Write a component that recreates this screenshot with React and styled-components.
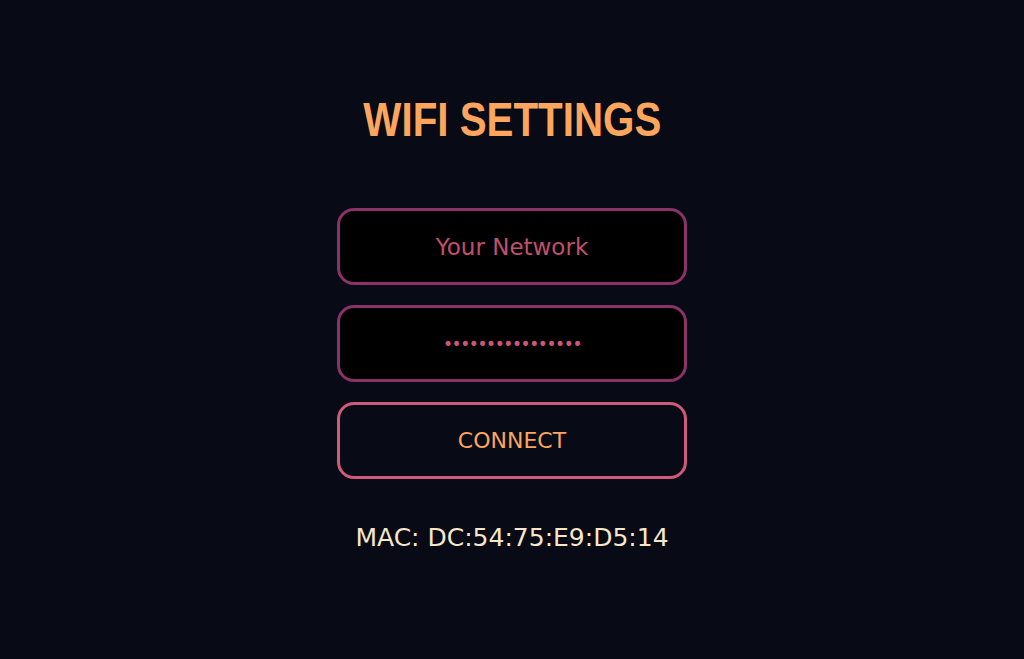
import styled, { createGlobalStyle } from "styled-components";

const GlobalStyle = createGlobalStyle`
  html, body {
    margin: 0;
    padding: 0;
    background: #080a16;
  }
`;

const Page = styled.div`
  min-height: 659px;
  display: flex;
  flex-direction: column;
  align-items: center;
  font-family: "DejaVu Sans", "Liberation Sans", sans-serif;
  background: #080a16;
`;

const Title = styled.h1`
  margin: 92px 0 0;
  font-family: "Liberation Sans", Arial, sans-serif;
  font-size: 48px;
  line-height: 56px;
  font-weight: 700;
  color: #fca55c;
  transform: scaleX(0.84);
`;

const Form = styled.form`
  margin-top: 60px;
  display: flex;
  flex-direction: column;
  gap: 20px;
  width: 350px;
`;

const Field = styled.input`
  box-sizing: border-box;
  width: 100%;
  height: 77px;
  border: 3px solid #8b3268;
  border-radius: 17px;
  background: #000;
  color: #d0557a;
  font-family: inherit;
  font-size: 23px;
  text-align: center;
  outline: none;

  &::placeholder {
    color: #c0506c;
  }
`;

const Dots = styled(Field)`
  font-size: 17px;
  letter-spacing: -1.4px;
`;

const Button = styled.button`
  box-sizing: border-box;
  width: 100%;
  height: 77px;
  border: 3px solid #d05a7a;
  border-radius: 17px;
  background: #080a16;
  color: #fca55c;
  font-family: inherit;
  font-size: 22px;
  cursor: pointer;
`;

const Mac = styled.p`
  margin: 44px 0 0;
  font-size: 25px;
  color: #f7e7c8;
`;

export default function App() {
  return (
    <>
      <GlobalStyle />
      <Page>
        <Title>WIFI SETTINGS</Title>
        <Form onSubmit={(e) => e.preventDefault()}>
          <Field type="text" placeholder="Your Network" />
          <Dots type="password" defaultValue="passwordpassword" />
          <Button type="submit">CONNECT</Button>
        </Form>
        <Mac>MAC: DC:54:75:E9:D5:14</Mac>
      </Page>
    </>
  );
}
